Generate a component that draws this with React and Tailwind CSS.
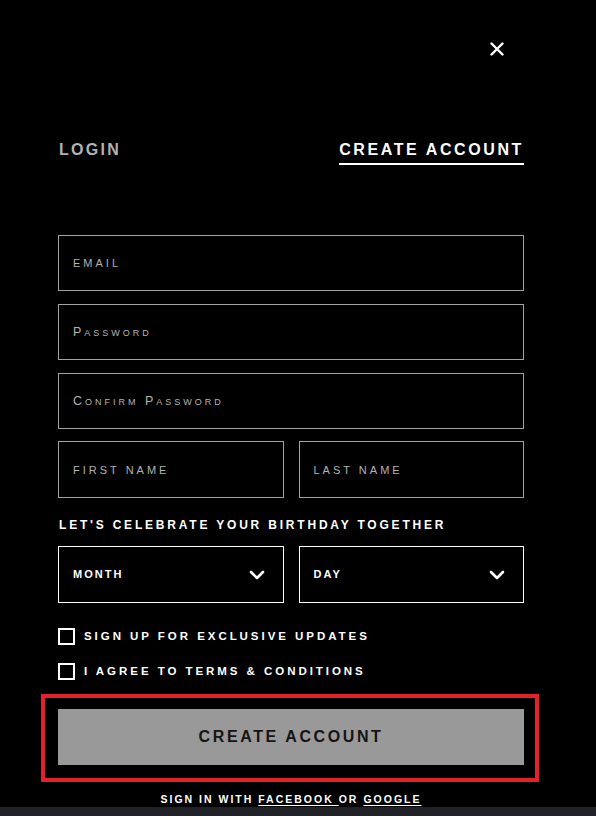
import React from 'react';

const font = { fontFamily: '"Liberation Sans", Arial, sans-serif' };

const Field = ({ placeholder, caps = true, className = 'h-[56px]' }) => (
  <input
    type="text"
    placeholder={placeholder}
    className={`w-full border border-[#a3a3a3] bg-black px-[14px] tracking-[3px] text-white outline-none placeholder:text-[#b4b4b4] ${caps ? 'text-[11px] uppercase' : 'text-[12.5px] tracking-[3.4px] [font-variant:small-caps]'} ${className}`}
  />
);

const Select = ({ label }) => (
  <div className="flex h-[57px] flex-1 items-center justify-between border border-white px-[14px]">
    <span className="text-[11px] font-bold tracking-[2px] text-white">{label}</span>
    <svg width="16" height="10" viewBox="0 0 16 10" className="mr-[4px]">
      <polyline points="2,2 8,8 14,2" fill="none" stroke="white" strokeWidth="2.6" strokeLinecap="round" strokeLinejoin="round" />
    </svg>
  </div>
);

const Check = ({ label }) => (
  <label className="flex items-center gap-[9px]">
    <span className="h-[17px] w-[17px] border-2 border-white"></span>
    <span className="text-[11.5px] font-bold tracking-[2.95px] text-white">{label}</span>
  </label>
);

export default function App() {
  return (
    <div style={font} className="flex h-[816px] w-full flex-col bg-black">
      <div className="flex-1 pl-[58px]">
        <div className="w-[466px]">
          {/* close */}
          <div className="flex justify-end pr-[20px] pt-[42px]">
            <svg width="14" height="14" viewBox="0 0 14 14">
              <path d="M1.5 1.5 L12.5 12.5 M12.5 1.5 L1.5 12.5" stroke="white" strokeWidth="2.4" strokeLinecap="round" />
            </svg>
          </div>

          {/* tabs */}
          <div className="mt-[84px] flex items-start justify-between pl-px">
            <span className="text-[16px] font-bold leading-[20px] tracking-[2.3px] text-[#b3b3b3]">LOGIN</span>
            <span className="border-b-2 border-white pb-[3px] text-[16px] font-bold leading-[20px] tracking-[2.6px] text-white">
              CREATE ACCOUNT
            </span>
          </div>

          {/* form */}
          <div className="mt-[70px] flex flex-col gap-[13px]">
            <Field placeholder="Email" />
            <Field placeholder="Password" caps={false} />
            <Field placeholder="Confirm Password" caps={false} />
            <div className="-mt-px flex gap-[15px]">
              <Field placeholder="First Name" className="h-[57px]" />
              <Field placeholder="Last Name" className="h-[57px]" />
            </div>
          </div>

          <p className="mt-[19px] pl-px text-[12px] font-bold leading-[16px] tracking-[2.8px] text-white">
            LET'S CELEBRATE YOUR BIRTHDAY TOGETHER
          </p>

          <div className="mt-[13px] flex gap-[15px]">
            <Select label="MONTH" />
            <Select label="DAY" />
          </div>

          <div className="mt-[25px] flex flex-col gap-[18px]">
            <Check label="SIGN UP FOR EXCLUSIVE UPDATES" />
            <Check label="I AGREE TO TERMS & CONDITIONS" />
          </div>

          <div className="relative mt-[28px]">
            <div className="pointer-events-none absolute -bottom-[17px] -left-[17px] -right-[15px] -top-[15px] border-4 border-[#e3202b]"></div>
            <button className="h-[56px] w-full bg-[#999999] text-[16px] font-bold tracking-[2.6px] text-[#141414]">
              CREATE ACCOUNT
            </button>
          </div>

          <p className="mt-[27px] text-center text-[10.5px] font-bold leading-[14px] tracking-[2px] text-white">
            SIGN IN WITH <span className="underline underline-offset-2">FACEBOOK </span>OR{' '}
            <span className="underline underline-offset-2">GOOGLE</span>
          </p>
        </div>
      </div>
      <div className="h-[9px] bg-[#1f2126]"></div>
    </div>
  );
}
